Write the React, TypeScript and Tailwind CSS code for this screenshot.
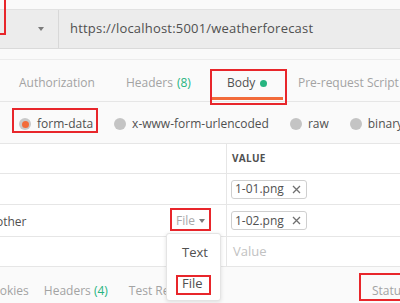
import React from "react";

const red = "pointer-events-none absolute border-2 border-[#e8262b]";

function Radio({ checked }: { checked?: boolean }) {
  return checked ? (
    <span className="flex h-[12px] w-[12px] items-center justify-center rounded-full bg-[#c9c9c9]">
      <span className="h-[7px] w-[7px] rounded-full bg-[#f26b3a]" />
    </span>
  ) : (
    <span className="h-[12px] w-[12px] rounded-full bg-[#c4c4c4]" />
  );
}

function Chip({ name }: { name: string }) {
  return (
    <div className="flex h-[19px] w-[76px] items-center justify-between rounded-[3px] border border-[#cfcfcf] bg-white pl-[3px] pr-[5px] text-[12px] text-[#505050]">
      <span>{name}</span>
      <svg width="9" height="9" viewBox="0 0 9 9" className="text-[#707070]">
        <path d="M1 1L8 8M8 1L1 8" stroke="currentColor" strokeWidth="1.3" />
      </svg>
    </div>
  );
}

export default function App() {
  return (
    <div className="relative h-[303px] w-[400px] overflow-hidden bg-[#fafafa] font-['Open_Sans',sans-serif] text-[12px] text-[#505050]">
      {/* url bar */}
      <div className="h-[10px] border-b border-[#e2e2e2]" />
      <div className="flex h-[39px] items-center border-b border-[#dadada] bg-[#ececec]">
        <div className="flex h-full w-[59px] items-center justify-end border-r border-[#d8d8d8] pr-[14px]">
          <span className="h-0 w-0 border-x-[3.5px] border-t-[4px] border-x-transparent border-t-[#7b7b7b]" />
        </div>
        <span className="ml-[11px] text-[13px] tracking-[0.2px]">https://localhost:5001/weatherforecast</span>
      </div>
      <div className="absolute -left-[10px] -top-[10px] h-[45px] w-[16px] border-2 border-[#e8262b]" />
      <div className="h-[11px] border-b border-[#ececec]" />

      {/* request tabs */}
      <div className="flex h-[42px] items-stretch border-b border-[#e6e6e6] pl-[4px] text-[#a3a3a3]">
        <div className="flex w-[107px] items-center pl-[15px] pt-[5px]">Authorization</div>
        <div className="flex w-[101px] items-center pl-[15px] pt-[5px]">
          Headers <span className="ml-[4px] text-[#26b47f]">(8)</span>
        </div>
        <div className="relative flex w-[71px] items-center pl-[15px] pt-[5px] text-[#505050]">
          Body
          <span className="ml-[5px] h-[7px] w-[7px] rounded-full bg-[#26b47f]" />
          <span className="absolute bottom-[1px] left-0 right-0 h-[3px] bg-[#f26b3a]" />
          <span className={`${red} -left-[2px] top-[9px] h-[36px] w-[77px]`} />
        </div>
        <div className="flex items-center whitespace-nowrap pl-[15px] pt-[5px]">Pre-request Script</div>
      </div>

      {/* body type */}
      <div className="flex h-[42px] items-center gap-[21px] border-b border-[#e6e6e6] pl-[19px] pt-[3px] whitespace-nowrap">
        <div className="relative flex items-center gap-[6px]">
          <Radio checked />
          <span>form-data</span>
          <span className={`${red} -left-[7px] -top-[7px] h-[25px] w-[86px]`} />
        </div>
        <div className="flex items-center gap-[6px]">
          <Radio />
          <span>x-www-form-urlencoded</span>
        </div>
        <div className="flex items-center gap-[6px]">
          <Radio />
          <span>raw</span>
        </div>
        <div className="flex items-center gap-[6px]">
          <Radio />
          <span>binary</span>
        </div>
      </div>

      {/* table */}
      <div className="bg-white">
        <div className="flex h-[30px] border-b border-[#e6e6e6]">
          <div className="w-[226px] shrink-0" />
          <div className="flex flex-1 items-center border-l border-[#e6e6e6] pl-[5px] text-[10px] font-bold tracking-[0.3px] text-[#505050]">
            VALUE
          </div>
        </div>
        <div className="flex h-[31px] border-b border-[#e6e6e6]">
          <div className="w-[226px] shrink-0" />
          <div className="flex flex-1 items-center border-l border-[#e6e6e6] pl-[4px]">
            <Chip name="1-01.png" />
          </div>
        </div>
        <div className="flex h-[32px] border-b border-[#e6e6e6]">
          <div className="flex w-[226px] shrink-0 items-center justify-between pr-[21px]">
            <span className="-ml-[4px] pt-[2px]">other</span>
            <div className="relative flex items-center text-[#a9a9a9]">
              File
              <span className="ml-[4px] h-0 w-0 border-x-[3.5px] border-t-[4px] border-x-transparent border-t-[#7b7b7b]" />
              <span className={`${red} -left-[6px] -top-[4px] h-[23px] w-[41px]`} />
            </div>
          </div>
          <div className="flex flex-1 items-center border-l border-[#e6e6e6] pl-[4px]">
            <Chip name="1-02.png" />
          </div>
        </div>
        <div className="flex h-[30px] border-b border-[#e6e6e6]">
          <div className="w-[226px] shrink-0" />
          <div className="flex flex-1 items-center border-l border-[#e6e6e6] pl-[6px] text-[13px] text-[#c2c2c2]">
            Value
          </div>
        </div>
      </div>

      {/* response tabs */}
      <div className="flex h-[37px] items-center whitespace-nowrap pt-[10px] text-[#a3a3a3]">
        <span className="-ml-[15px]">Cookies</span>
        <span className="ml-[15px]">
          Headers <span className="text-[#26b47f]">(4)</span>
        </span>
        <span className="ml-[21px]">Test Results</span>
        <span className="relative ml-auto mr-[-10px] w-[38px]">
          Status
          <span className={`${red} -left-[13px] -top-[9px] h-[28px] w-[60px]`} />
        </span>
      </div>

      {/* type menu */}
      <div className="absolute left-[166px] top-[233px] flex h-[68px] w-[55px] flex-col rounded-[3px] border border-[#e4e4e4] bg-white pl-[15px] shadow-[0_1px_4px_rgba(0,0,0,0.12)]">
        <span className="mt-[9px] text-[13px] text-[#505050]">Text</span>
        <span className="relative mt-[11px] text-[13px] text-[#505050]">
          File
          <span className={`${red} -left-[6px] top-[1px] h-[20px] w-[35px]`} />
        </span>
      </div>
    </div>
  );
}
